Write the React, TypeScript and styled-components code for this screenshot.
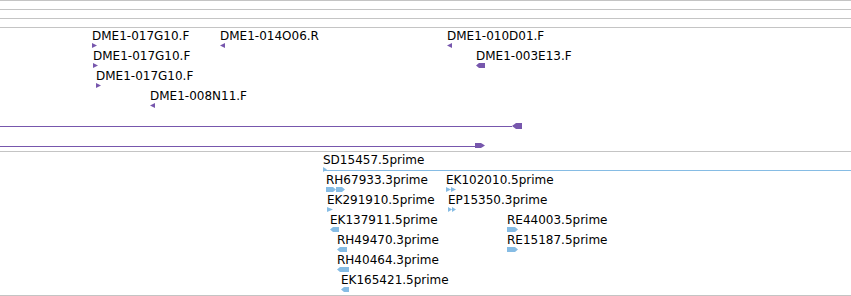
import styled, { createGlobalStyle } from "styled-components";

const PURPLE = "#7757ad";
const BLUE = "#86bce4";

type Dir = "right" | "left" | "double";

type Feat = { name?: string; x: number; top: number; dir: Dir; w: number };

const dmeFeatures: Feat[] = [
  { name: "DME1-017G10.F", x: 92, top: 2, dir: "right", w: 5 },
  { name: "DME1-014O06.R", x: 220, top: 2, dir: "left", w: 5 },
  { name: "DME1-010D01.F", x: 447, top: 2, dir: "left", w: 5 },
  { name: "DME1-017G10.F", x: 93, top: 22, dir: "right", w: 5 },
  { name: "DME1-003E13.F", x: 476, top: 22, dir: "left", w: 9 },
  { name: "DME1-017G10.F", x: 96, top: 42, dir: "right", w: 5 },
  { name: "DME1-008N11.F", x: 150, top: 62, dir: "left", w: 5 },
];

const cdnaFeatures: Feat[] = [
  { name: "RH67933.3prime", x: 326, top: 22, dir: "double", w: 19 },
  { name: "EK102010.5prime", x: 446, top: 22, dir: "double", w: 10 },
  { name: "EK291910.5prime", x: 327, top: 42, dir: "right", w: 6 },
  { name: "EP15350.3prime", x: 448, top: 42, dir: "double", w: 8 },
  { name: "EK137911.5prime", x: 330, top: 62, dir: "left", w: 9 },
  { name: "RE44003.5prime", x: 507, top: 62, dir: "right", w: 11 },
  { name: "RH49470.3prime", x: 337, top: 82, dir: "left", w: 10 },
  { name: "RE15187.5prime", x: 507, top: 82, dir: "right", w: 11 },
  { name: "RH40464.3prime", x: 337, top: 102, dir: "left", w: 12 },
  { name: "EK165421.5prime", x: 341, top: 122, dir: "left", w: 8 },
];

const GlobalStyle = createGlobalStyle`
  html, body {
    margin: 0;
    padding: 0;
    background: #ffffff;
  }
`;

const Panel = styled.div`
  width: 851px;
  height: 296px;
  overflow: hidden;
  background: #fff;
  font-family: "DejaVu Sans", "Liberation Sans", sans-serif;
`;

const RulerRow = styled.div`
  height: 8px;
  border-top: 1px solid #c4c4c4;
`;

const Track = styled.div<{ $h: number; $last?: boolean }>`
  position: relative;
  height: ${(p) => p.$h}px;
  border-top: 1px solid #c4c4c4;
  border-bottom: ${(p) => (p.$last ? "1px solid #c4c4c4" : "none")};
`;

const Feature = styled.div`
  position: absolute;
  display: flex;
  flex-direction: column;
  align-items: flex-start;
  gap: 1px;
`;

const Label = styled.span`
  font-size: 12px;
  line-height: 12px;
  height: 12px;
  color: #000;
  white-space: nowrap;
`;

const GlyphSvg = styled.svg`
  display: block;
  overflow: visible;
`;

function arrow(x0: number, w: number, dir: "right" | "left") {
  if (w <= 6) {
    return dir === "right"
      ? `${x0},0 ${x0 + w},2.5 ${x0},5`
      : `${x0 + w},0 ${x0},2.5 ${x0 + w},5`;
  }
  return dir === "right"
    ? `${x0},0 ${x0 + w - 3},0 ${x0 + w},2.5 ${x0 + w - 3},5 ${x0},5`
    : `${x0 + w},0 ${x0 + 3},0 ${x0},2.5 ${x0 + 3},5 ${x0 + w},5`;
}

function Glyph({ dir, w, color }: { dir: Dir; w: number; color: string }) {
  const half = Math.round(w / 2);
  return (
    <GlyphSvg width={w} height={5}>
      {dir === "double" ? (
        <>
          <polygon points={arrow(0, half, "right")} fill={color} />
          <polygon points={arrow(half, w - half, "right")} fill={color} />
        </>
      ) : (
        <polygon points={arrow(0, w, dir)} fill={color} />
      )}
    </GlyphSvg>
  );
}

function FeatureItem({ f, color }: { f: Feat; color: string }) {
  return (
    <Feature style={{ left: f.x, top: f.top }}>
      {f.name && <Label>{f.name}</Label>}
      <Glyph dir={f.dir} w={f.w} color={color} />
    </Feature>
  );
}

// thin alignment line running in from the left edge, ending in a block
function SpanLine({ end, top, dir }: { end: number; top: number; dir: "left" | "right" }) {
  const bw = 10;
  return (
    <Feature style={{ left: 0, top }}>
      <GlyphSvg width={end + bw} height={6}>
        <rect x={0} y={3} width={end} height={1} fill={PURPLE} />
        {dir === "left" ? (
          <polygon
            points={`${end},3 ${end + 4},0 ${end + bw},0 ${end + bw},6 ${end + 4},6`}
            fill={PURPLE}
          />
        ) : (
          <polygon
            points={`${end},0 ${end + 6},0 ${end + bw},2.5 ${end + 6},5 ${end},5`}
            fill={PURPLE}
          />
        )}
      </GlyphSvg>
    </Feature>
  );
}

export default function App() {
  return (
    <Panel>
      <GlobalStyle />
      <RulerRow />
      <RulerRow />
      <RulerRow />
      <Track $h={123}>
        {dmeFeatures.map((f, i) => (
          <FeatureItem key={i} f={f} color={PURPLE} />
        ))}
        <SpanLine end={512} top={95} dir="left" />
        <SpanLine end={475} top={115} dir="right" />
      </Track>
      <Track $h={143} $last>
        <Feature style={{ left: 323, top: 2 }}>
          <Label>SD15457.5prime</Label>
          <GlyphSvg width={851 - 323} height={5}>
            <polygon points="0,0 4,2.5 0,5" fill={BLUE} />
            <rect x={0} y={3} width={851 - 323} height={1} fill={BLUE} />
          </GlyphSvg>
        </Feature>
        {cdnaFeatures.map((f, i) => (
          <FeatureItem key={i} f={f} color={BLUE} />
        ))}
      </Track>
    </Panel>
  );
}
